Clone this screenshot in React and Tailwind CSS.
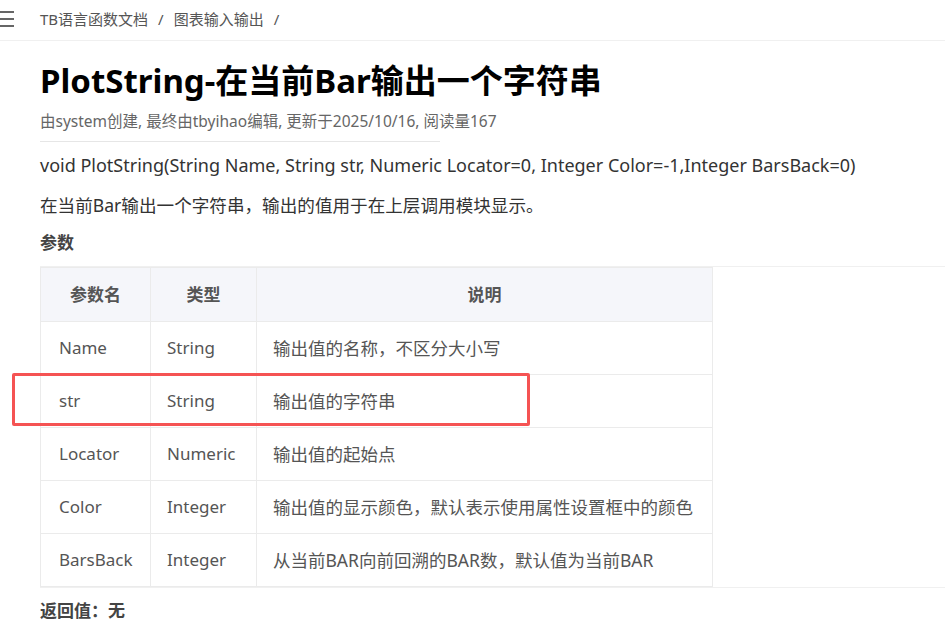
import React from 'react';

const rows = [
  { name: 'Name', type: 'String', desc: '输出值的名称，不区分大小写' },
  { name: 'str', type: 'String', desc: '输出值的字符串' },
  { name: 'Locator', type: 'Numeric', desc: '输出值的起始点' },
  { name: 'Color', type: 'Integer', desc: '输出值的显示颜色，默认表示使用属性设置框中的颜色' },
  { name: 'BarsBack', type: 'Integer', desc: '从当前BAR向前回溯的BAR数，默认值为当前BAR' },
];

const App = () => {
  return (
    <div
      className="relative min-h-[627px] w-[945px] overflow-hidden bg-white text-[#333]"
      style={{ fontFamily: '"Noto Sans", "Noto Sans CJK SC", sans-serif' }}
    >
      {/* top bar */}
      <div className="flex h-[41px] items-center border-b border-[#f0f0f0]">
        <div className="flex w-[40px] flex-col gap-[5px] pb-[3px]">
          <span className="block h-[2px] w-[14px] bg-[#666]" />
          <span className="block h-[2px] w-[14px] bg-[#666]" />
          <span className="block h-[2px] w-[14px] bg-[#666]" />
        </div>
        <div className="flex items-center gap-[10px] pb-[2px] text-[15px] text-[#555]">
          <span>TB语言函数文档</span>
          <span>/</span>
          <span>图表输入输出</span>
          <span>/</span>
        </div>
      </div>

      <div className="pl-[40px]">
        <h1 className="mt-[18px] text-[33px] font-bold leading-[44px] text-black">
          PlotString-在当前Bar输出一个字符串
        </h1>
        <div className="mt-[8px] w-[400px] whitespace-nowrap border-b border-[#e6e6e6] pb-[10px] text-[15.5px] leading-[20px] text-[#666]">
          由system创建, 最终由tbyihao编辑, 更新于2025/10/16, 阅读量167
        </div>
        <p className="mt-[10px] text-[18px] leading-[26px]">
          void PlotString(String Name, String str, Numeric Locator=0, Integer Color=-1,Integer BarsBack=0)
        </p>
        <p className="mt-[14px] text-[17.6px] leading-[26px]">
          在当前Bar输出一个字符串，输出的值用于在上层调用模块显示。
        </p>
        <p className="mt-[12px] text-[17px] font-bold leading-[26px] text-[#444]">参数</p>

        <div className="mt-[10px] border-y border-[#f0f0f0]">
          <table className="w-[673px] table-fixed border-collapse text-[17px] text-[#555]">
            <colgroup>
              <col className="w-[110px]" />
              <col className="w-[106px]" />
              <col />
            </colgroup>
            <thead>
              <tr className="h-[54px] bg-[#f5f6fa]">
                <th className="border border-[#ebebeb] text-center text-[17px] font-bold">参数名</th>
                <th className="border border-[#ebebeb] text-center text-[17px] font-bold">类型</th>
                <th className="border border-[#ebebeb] text-center text-[17px] font-bold">说明</th>
              </tr>
            </thead>
            <tbody>
              {rows.map((r) => (
                <tr key={r.name} className="h-[53px]">
                  <td className="border border-[#ebebeb] pl-[18px]">{r.name}</td>
                  <td className="border border-[#ebebeb] pl-[16px]">{r.type}</td>
                  <td className="whitespace-nowrap border border-[#ebebeb] pl-[16px] text-[17.5px]">{r.desc}</td>
                </tr>
              ))}
            </tbody>
          </table>
        </div>

        <p className="mt-[10px] text-[17px] font-bold leading-[26px] text-[#444]">返回值：无</p>
      </div>

      {/* highlight box */}
      <div className="absolute left-[12px] top-[373px] h-[53px] w-[518px] rounded-[2px] border-[3px] border-[#f55353]" />
    </div>
  );
};

export default App;
